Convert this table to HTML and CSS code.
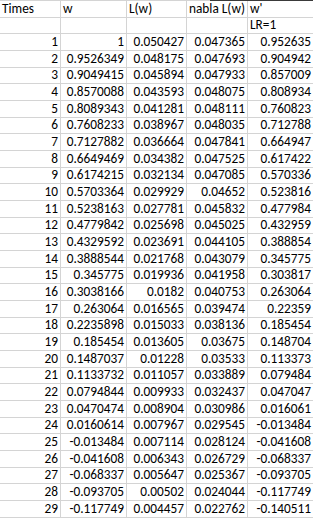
FILE: index.html
```html
<!DOCTYPE html>
<html>
<head>
<meta charset="utf-8">
<link rel="stylesheet" href="styles.css">
</head>
<body>
<div class="topline"></div>
<div class="sheet">
  <div class="c t">Times</div><div class="c t">w</div><div class="c t">L(w)</div><div class="c t">nabla L(w)</div><div class="c t">w'</div>
  <div class="c"></div><div class="c"></div><div class="c"></div><div class="c"></div><div class="c t">LR=1</div>
  <div class="c">1</div><div class="c">1</div><div class="c">0.050427</div><div class="c">0.047365</div><div class="c">0.952635</div>
  <div class="c">2</div><div class="c">0.9526349</div><div class="c">0.048175</div><div class="c">0.047693</div><div class="c">0.904942</div>
  <div class="c">3</div><div class="c">0.9049415</div><div class="c">0.045894</div><div class="c">0.047933</div><div class="c">0.857009</div>
  <div class="c">4</div><div class="c">0.8570088</div><div class="c">0.043593</div><div class="c">0.048075</div><div class="c">0.808934</div>
  <div class="c">5</div><div class="c">0.8089343</div><div class="c">0.041281</div><div class="c">0.048111</div><div class="c">0.760823</div>
  <div class="c">6</div><div class="c">0.7608233</div><div class="c">0.038967</div><div class="c">0.048035</div><div class="c">0.712788</div>
  <div class="c">7</div><div class="c">0.7127882</div><div class="c">0.036664</div><div class="c">0.047841</div><div class="c">0.664947</div>
  <div class="c">8</div><div class="c">0.6649469</div><div class="c">0.034382</div><div class="c">0.047525</div><div class="c">0.617422</div>
  <div class="c">9</div><div class="c">0.6174215</div><div class="c">0.032134</div><div class="c">0.047085</div><div class="c">0.570336</div>
  <div class="c">10</div><div class="c">0.5703364</div><div class="c">0.029929</div><div class="c">0.04652</div><div class="c">0.523816</div>
  <div class="c">11</div><div class="c">0.5238163</div><div class="c">0.027781</div><div class="c">0.045832</div><div class="c">0.477984</div>
  <div class="c">12</div><div class="c">0.4779842</div><div class="c">0.025698</div><div class="c">0.045025</div><div class="c">0.432959</div>
  <div class="c">13</div><div class="c">0.4329592</div><div class="c">0.023691</div><div class="c">0.044105</div><div class="c">0.388854</div>
  <div class="c">14</div><div class="c">0.3888544</div><div class="c">0.021768</div><div class="c">0.043079</div><div class="c">0.345775</div>
  <div class="c">15</div><div class="c">0.345775</div><div class="c">0.019936</div><div class="c">0.041958</div><div class="c">0.303817</div>
  <div class="c">16</div><div class="c">0.3038166</div><div class="c">0.0182</div><div class="c">0.040753</div><div class="c">0.263064</div>
  <div class="c">17</div><div class="c">0.263064</div><div class="c">0.016565</div><div class="c">0.039474</div><div class="c">0.22359</div>
  <div class="c">18</div><div class="c">0.2235898</div><div class="c">0.015033</div><div class="c">0.038136</div><div class="c">0.185454</div>
  <div class="c">19</div><div class="c">0.185454</div><div class="c">0.013605</div><div class="c">0.03675</div><div class="c">0.148704</div>
  <div class="c">20</div><div class="c">0.1487037</div><div class="c">0.01228</div><div class="c">0.03533</div><div class="c">0.113373</div>
  <div class="c">21</div><div class="c">0.1133732</div><div class="c">0.011057</div><div class="c">0.033889</div><div class="c">0.079484</div>
  <div class="c">22</div><div class="c">0.0794844</div><div class="c">0.009933</div><div class="c">0.032437</div><div class="c">0.047047</div>
  <div class="c">23</div><div class="c">0.0470474</div><div class="c">0.008904</div><div class="c">0.030986</div><div class="c">0.016061</div>
  <div class="c">24</div><div class="c">0.0160614</div><div class="c">0.007967</div><div class="c">0.029545</div><div class="c">-0.013484</div>
  <div class="c">25</div><div class="c">-0.013484</div><div class="c">0.007114</div><div class="c">0.028124</div><div class="c">-0.041608</div>
  <div class="c">26</div><div class="c">-0.041608</div><div class="c">0.006343</div><div class="c">0.026729</div><div class="c">-0.068337</div>
  <div class="c">27</div><div class="c">-0.068337</div><div class="c">0.005647</div><div class="c">0.025367</div><div class="c">-0.093705</div>
  <div class="c">28</div><div class="c">-0.093705</div><div class="c">0.00502</div><div class="c">0.024044</div><div class="c">-0.117749</div>
  <div class="c">29</div><div class="c">-0.117749</div><div class="c">0.004457</div><div class="c">0.022762</div><div class="c">-0.140511</div>
</div>
</body>
</html>
```
FILE: styles.css
```css
html, body {
  margin: 0;
  padding: 0;
  background: #ffffff;
}
body {
  width: 313px;
  height: 519px;
  overflow: hidden;
  font-family: "Carlito", "Liberation Sans", sans-serif;
  font-size: 13.3px;
  color: #000000;
}
.topline {
  height: 1px;
  background: linear-gradient(to right, #d4d4d4 210px, #3a3a3a 210px);
}
.sheet {
  display: grid;
  grid-template-columns: 60px 65px 59px 60px 65px;
  grid-auto-rows: 15.68px;
  column-gap: 1px;
  row-gap: 1px;
  background: #d4d4d4;
  padding-bottom: 1px;
  width: 313px;
}
.c {
  background: #ffffff;
  display: flex;
  align-items: flex-end;
  justify-content: flex-end;
  padding: 0 2px 1px 1px;
  line-height: 14px;
  white-space: nowrap;
  overflow: hidden;
}
.c.t {
  justify-content: flex-start;
  padding-left: 2px;
}
```
